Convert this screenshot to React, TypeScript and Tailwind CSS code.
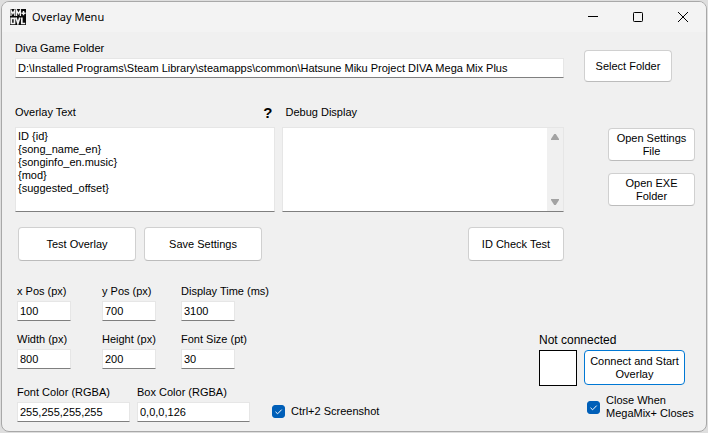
import { useId } from "react";
import type { ReactNode } from "react";

const boxLook =
  "block w-full rounded-none border border-[#e6e6e6] border-b-[#7f7f7f] bg-white text-black outline-none";

function Field({ label, value, className }: { label: string; value: string; className?: string }) {
  const id = useId();
  return (
    <div className={className}>
      <label htmlFor={id} className="block whitespace-nowrap">
        {label}
      </label>
      <input id={id} type="text" defaultValue={value} className={`${boxLook} mt-[3px] h-5 px-0.5`} />
    </div>
  );
}

function PushButton({ children, className = "", primary = false }: { children: ReactNode; className?: string; primary?: boolean }) {
  return (
    <button
      type="button"
      className={`rounded border bg-white text-center ${primary ? "border-[#0078d4]" : "border-[#d0d0d0] border-b-[#bcbcbc]"} ${className}`}
    >
      {children}
    </button>
  );
}

function Tick({ children, className = "" }: { children: ReactNode; className?: string }) {
  const id = useId();
  return (
    <div className={`flex items-center gap-1.5 ${className}`}>
      <span className="relative block size-[13px] shrink-0">
        <input
          id={id}
          type="checkbox"
          defaultChecked
          className="peer block size-[13px] appearance-none rounded-[3px] border border-[#8a8a8a] bg-white checked:border-[#005fb8] checked:bg-[#005fb8]"
        />
        <svg viewBox="0 0 13 13" className="pointer-events-none absolute inset-0 hidden size-[13px] peer-checked:block" fill="none" stroke="#fff" strokeWidth="1">
          <path d="M3.5 6.8 5.6 8.8 9.7 4.6" />
        </svg>
      </span>
      <label htmlFor={id}>{children}</label>
    </div>
  );
}

function TitleBar() {
  return (
    <header className="flex h-[30px] items-center bg-[#f3f3f3] pl-2">
      <svg viewBox="0 0 16 16" className="size-4" aria-hidden="true">
        <rect width="16" height="16" fill="#0a0a0a" />
        <g fill="none" stroke="#f2f2f2">
          <path d="M1 7V1.2L2.9 4.6 4.8 1.2V7M6.6 7V1.2L8.5 4.6 10.4 1.2V7" strokeWidth="1.3" />
          <path d="M11.4 4.2H15.6M13.5 2.1V6.3" strokeWidth="1.5" />
          <path d="M1.3 9.3H4.5V14.5H1.3ZM6 8.5 7.9 14.4 9.8 8.5M11.8 8.4V14.5H15.2" strokeWidth="1.7" />
        </g>
      </svg>
      <h1 className="ml-1.5 flex-1 font-['Noto_Sans',sans-serif] text-[11px] leading-4">Overlay Menu</h1>
      <button type="button" aria-label="Minimize" className="flex h-full w-[45px] items-center justify-center">
        <svg viewBox="0 0 10 10" className="size-2.5" stroke="#000">
          <path d="M0 4.5H10" />
        </svg>
      </button>
      <button type="button" aria-label="Maximize" className="flex h-full w-[45px] items-center justify-center">
        <svg viewBox="0 0 10 10" className="size-2.5" fill="none" stroke="#000">
          <rect x=".5" y=".5" width="9" height="9" rx=".8" />
        </svg>
      </button>
      <button type="button" aria-label="Close" className="flex h-full w-[46px] items-center justify-center">
        <svg viewBox="0 0 10 10" className="size-2.5" stroke="#000">
          <path d="M0 0 10 10M10 0 0 10" />
        </svg>
      </button>
    </header>
  );
}

const template = "ID {id}\n{song_name_en}\n{songinfo_en.music}\n{mod}\n{suggested_offset}";

export default function App() {
  return (
    <div className="flex min-h-screen bg-[#dedede] p-px font-['Liberation_Sans',Arial,sans-serif] text-[11px] leading-[13px] text-black">
      <div className="flex flex-1 flex-col overflow-hidden rounded-lg border border-[#a8a8a8] bg-[#f0f0f0]">
        <TitleBar />
        <main className="flex flex-1 flex-col pr-[11px] pl-[13px]">
          <section className="flex pt-2.5">
            <Field
              label="Diva Game Folder"
              value="D:\Installed Programs\Steam Library\steamapps\common\Hatsune Miku Project DIVA Mega Mix Plus"
              className="flex-1"
            />
            <div className="flex w-[131px] items-end pl-5">
              <PushButton className="-mb-1 h-8 w-[88px]">Select Folder</PushButton>
            </div>
          </section>

          <section className="mt-7 flex">
            <div className="flex flex-1 gap-[7px]">
              <div className="flex flex-[260] flex-col">
                <div className="flex justify-between">
                  <label htmlFor="overlay-text">Overlay Text</label>
                  <button type="button" aria-label="Overlay text help" className="pr-0.5 text-[15px] font-bold">
                    ?
                  </button>
                </div>
                <textarea id="overlay-text" defaultValue={template} className={`${boxLook} mt-2 h-[85px] resize-none px-0.5 pt-0.5`} />
              </div>
              <div className="flex flex-[283] flex-col">
                <label htmlFor="debug" className="pl-1">
                  Debug Display
                </label>
                <div className={`${boxLook} mt-2 h-[85px]`}>
                  <div className="flex h-full">
                    <textarea id="debug" readOnly className="flex-1 resize-none outline-none" />
                    <div className="flex w-4 flex-col items-center justify-between bg-[#f0f0f0] py-1.5">
                      <svg viewBox="0 0 8 6" className="h-1.5 w-2" fill="#a3a3a3">
                        <path d="M3.2 0H4.8L8 5V6H0V5Z" />
                      </svg>
                      <svg viewBox="0 0 8 6" className="h-1.5 w-2" fill="#a3a3a3">
                        <path d="M3.2 6H4.8L8 1V0H0V1Z" />
                      </svg>
                    </div>
                  </div>
                </div>
              </div>
            </div>
            <div className="flex w-[131px] flex-col items-end gap-3 pt-[22px]">
              <PushButton className="h-[33px] w-[87px]">
                Open Settings
                <br />
                File
              </PushButton>
              <PushButton className="h-[33px] w-[87px]">
                Open EXE
                <br />
                Folder
              </PushButton>
            </div>
          </section>

          <section className="mt-[15px] mr-[131px] flex gap-2 pl-[3px]">
            <PushButton className="h-[34px] w-[118px]">Test Overlay</PushButton>
            <PushButton className="h-[34px] w-[118px]">Save Settings</PushButton>
            <PushButton className="ml-auto h-[34px] w-24">ID Check Test</PushButton>
          </section>

          <section className="mt-6 flex items-end justify-between">
            <div className="flex flex-col gap-[17px] pl-0.5">
              <div className="grid grid-cols-[85px_79px_auto] gap-y-3">
                <Field label="x Pos (px)" value="100" className="w-[54px]" />
                <Field label="y Pos (px)" value="700" className="w-[54px]" />
                <Field label="Display Time (ms)" value="3100" className="w-[54px]" />
                <Field label="Width (px)" value="800" className="w-[54px]" />
                <Field label="Height (px)" value="200" className="w-[54px]" />
                <Field label="Font Size (pt)" value="30" className="w-[54px]" />
              </div>
              <div className="flex items-end gap-[7px]">
                <Field label="Font Color (RGBA)" value="255,255,255,255" className="w-[113px]" />
                <Field label="Box Color (RGBA)" value="0,0,0,126" className="w-[113px]" />
                <Tick className="mb-1 ml-[15px]">Ctrl+2 Screenshot</Tick>
              </div>
            </div>
            <div className="w-[156px] pb-0.5">
              <p className="text-[12px]">Not connected</p>
              <div className="mt-[3px] flex gap-[7px]">
                <div className="h-9 w-[38px] border border-black bg-white" />
                <PushButton primary className="h-[35px] w-[101px]">
                  Connect and Start
                  <br />
                  Overlay
                </PushButton>
              </div>
              <Tick className="mt-2 ml-12">
                Close When
                <br />
                MegaMix+ Closes
              </Tick>
            </div>
          </section>
        </main>
      </div>
    </div>
  );
}
